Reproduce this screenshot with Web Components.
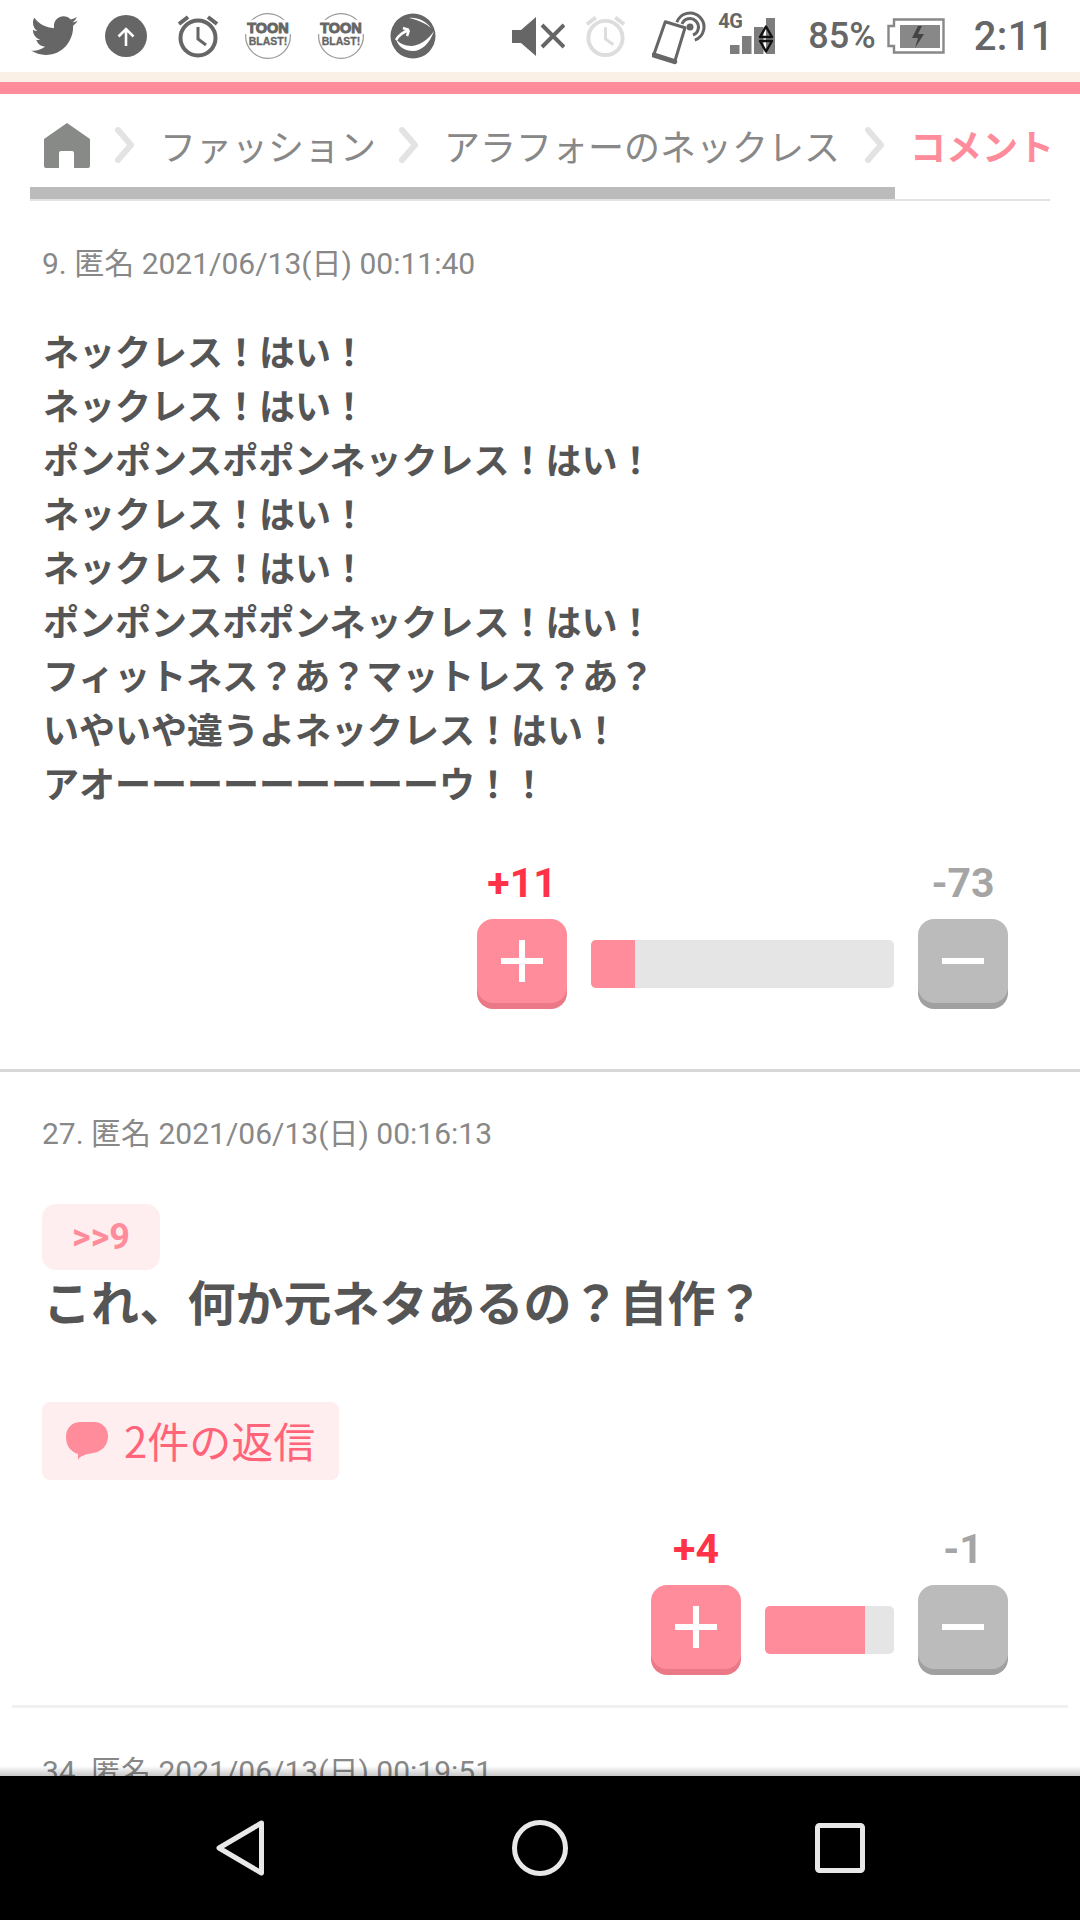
<!DOCTYPE html>
<html lang="ja">
<head>
<meta charset="utf-8">
<title>コメント</title>
<style>
html, body { margin: 0; padding: 0; background: #fff; }
body { width: 1080px; height: 1920px; overflow: hidden; font-family: Roboto, "Noto Sans CJK JP", sans-serif; }
</style>
</head>
<body>
<phone-page>
  <status-bar slot="status"></status-bar>
  <bread-crumbs slot="top"></bread-crumbs>
  <comment-item num="9" date="2021/06/13(日) 00:11:40" plus="11" minus="73" ratio="14.5">ネックレス！はい！<br>ネックレス！はい！<br>ポンポンスポポンネックレス！はい！<br>ネックレス！はい！<br>ネックレス！はい！<br>ポンポンスポポンネックレス！はい！<br>フィットネス？あ？マットレス？あ？<br>いやいや違うよネックレス！はい！<br>アオーーーーーーーーーウ！！</comment-item>
  <comment-item num="27" date="2021/06/13(日) 00:16:13" plus="4" minus="1" ratio="77.5" reply-to="9" replies="2" big="1">これ、何か元ネタあるの？自作？</comment-item>
  <comment-item num="34" date="2021/06/13(日) 00:19:51"></comment-item>
</phone-page>

<script>
// 外枠: 上のバー、スクロール部分、下のナビ
class PhonePage extends HTMLElement {
	constructor() {
		super();
		this.attachShadow({ mode: 'open' });
	}

	connectedCallback() {
		this.shadowRoot.innerHTML = `
		<style>
		:host { display: flex; flex-direction: column; width: 1080px; height: 1920px; background: #fff; }
		.stripe { height: 10px; background: #faf0e6; flex: none; }
		.pink { height: 12px; background: #ff8c9a; flex: none; }
		main { flex: 1; overflow: hidden; min-height: 0; position: relative; }
		.fade { position: absolute; left: 0; right: 0; bottom: 0; height: 10px; background: linear-gradient(rgba(0,0,0,0), rgba(0,0,0,.22)); }
		</style>
		<slot name="status"></slot>
		<div class="stripe"></div>
		<div class="pink"></div>
		<main><slot name="top"></slot><slot></slot><div class="fade"></div></main>
		<nav-bar></nav-bar>
		`;
	}
}

class StatusBar extends HTMLElement {
	constructor() {
		super();
		this.attachShadow({ mode: 'open' });
	}

	connectedCallback() {
		const toon = `<svg width="48" height="46" viewBox="0 0 48 46"><circle cx="24" cy="23" r="22.4" fill="#fff" stroke="#999" stroke-width="1.2"/><path d="M1 9 12 6 24 8 36 6 47 9 47 21 1 21Z" fill="#fff"/><text x="24" y="20" text-anchor="middle" font-family="Liberation Sans" font-weight="700" font-size="14.500" fill="#666" stroke="#666" stroke-width="1">TOON</text><text x="24" y="32" text-anchor="middle" font-family="Liberation Sans" font-weight="700" font-size="10.500" fill="#666" stroke="#666" stroke-width=".3">BLAST!</text></svg>`;
		this.shadowRoot.innerHTML = `
		<style>
		:host { display: flex; align-items: center; height: 72px; flex: none; background: #fff; color: #666; font-family: Roboto, sans-serif; }
		.left { display: flex; align-items: center; gap: 25px; padding-left: 31px; flex: 1; }
		.right { display: flex; align-items: center; padding-right: 26px; }
		svg { display: block; flex: none; }
		.pct { font-size: 36px; font-weight: 500; margin-left: 33px; }
		.time { font-size: 40px; font-weight: 500; margin-left: 29px; letter-spacing: .4px; }
		.net { position: relative; width: 60px; height: 42px; margin-left: 9px; }
		.four { position: absolute; left: 3px; top: -4px; font-size: 20px; line-height: 20px; font-weight: 700; letter-spacing: -.5px; }
		.net svg { position: absolute; left: 0; top: 0; }
		.ball { filter: blur(.5px); }
		</style>
		<div class="left">
			<svg width="47" height="40" viewBox="0 0 24 20" preserveAspectRatio="none"><path fill="#666" d="M24 2.400c-.9.400-1.800.700-2.800.800 1-.6 1.800-1.600 2.200-2.700-1 .6-2 1-3.100 1.200C19.300.7 18 .1 16.600.1c-2.700 0-4.900 2.200-4.900 4.900 0 .4 0 .8.100 1.100C7.700 5.900 4.100 4 1.700.9c-.4.700-.7 1.600-.7 2.500 0 1.700.9 3.200 2.200 4.100-.8 0-1.600-.2-2.200-.6v.1c0 2.400 1.700 4.400 3.900 4.800-.4.1-.8.200-1.300.2-.3 0-.6 0-.9-.1.6 2 2.400 3.400 4.600 3.400-1.700 1.300-3.800 2.100-6.100 2.100-.4 0-.8 0-1.200-.1 2.200 1.400 4.800 2.200 7.500 2.200 9.100 0 14-7.500 14-14v-.6c1-.7 1.800-1.600 2.500-2.600z"/></svg>
			<svg width="42" height="42" viewBox="0 0 42 42" style="margin-left:2px"><circle cx="21" cy="21" r="21" fill="#666"/><path d="M21 31V14M13.500 21.500 21 14l7.500 7.500" fill="none" stroke="#fff" stroke-width="2.600"/></svg>
			<svg width="42" height="44" viewBox="0 0 42 44" style="margin-left:5px"><circle cx="21" cy="24" r="17.500" fill="none" stroke="#666" stroke-width="4"/><path d="M21 13v12l8 6" fill="none" stroke="#666" stroke-width="3"/><path d="M2 10 11 3M40 10 31 3" stroke="#666" stroke-width="4"/></svg>
			${toon}
			${toon}
			<svg class="ball" width="46" height="46" viewBox="0 0 46 46"><circle cx="23" cy="23" r="22.500" fill="#666"/><path d="M6 26C8 34 15 38 23 38 32 38 40 30 44 18 38 27 30 32 22 33 14 33 9 30 6 26Z" fill="#fff"/><path d="M19 5C27 4 36 8 41 15 35 10 28 7 19 5Z" fill="#fff"/><path d="M6 27C9 22 13 19 19 17M19 17 13 15M19 17 17 23" fill="none" stroke="#fff" stroke-width="2.500"/></svg>
		</div>
		<div class="right">
			<svg width="53" height="39" viewBox="0 0 53 39"><path d="M0 13H9L24 0V39L9 26H0Z" fill="#666"/><path d="M30 8 52 30M52 8 30 30" stroke="#666" stroke-width="4"/></svg>
			<svg width="41" height="44" viewBox="0 0 42 44" style="margin-left:20px"><circle cx="21" cy="24" r="17.500" fill="none" stroke="#ddd" stroke-width="4"/><path d="M21 13v12l8 6" fill="none" stroke="#ddd" stroke-width="3"/><path d="M2 10 11 3M40 10 31 3" stroke="#ddd" stroke-width="4"/></svg>
			<svg width="54" height="58" viewBox="0 0 54 58" style="margin-left:26px"><g fill="none" stroke="#666" stroke-width="3"><path d="M24.800 15.300A14 14 0 1 1 42.800 33.200"/><path d="M30 17A8.500 8.500 0 1 1 41 28"/></g><circle cx="38" cy="20" r="3.500" fill="#666"/><path d="M13.300 14.700 33 20.700 22.700 54.700 1.700 48Z" fill="#fff" stroke="#666" stroke-width="3" stroke-linejoin="round"/><path d="M1.700 48 22.700 54.700" stroke="#666" stroke-width="5" stroke-linecap="round"/></svg>
			<div class="net">
				<svg width="60" height="42" viewBox="0 0 60 42"><rect x="15" y="30" width="9.500" height="9" fill="#7d7d7d"/><rect x="27" y="21" width="9.500" height="18" fill="#7d7d7d"/><rect x="39" y="12" width="9.500" height="27" fill="#7d7d7d"/><rect x="51" y="3" width="9.500" height="36" fill="#7d7d7d"/><path d="M51 11.500 57 22H45ZM45 26H57L51 36.500Z" fill="none" stroke="#111" stroke-width="2.400" stroke-linejoin="round"/></svg>
				<span class="four">4G</span>
			</div>
			<span class="pct">85%</span>
			<svg width="58" height="36" viewBox="0 0 58 36" style="margin-left:11px"><path d="M7 1.500H56.500V34.500H7V28H1.500V8H7Z" fill="#fff" stroke="#888" stroke-width="2.400"/><rect x="13" y="7" width="40" height="23" fill="#888"/><path d="M31 8 25 20H31L28 30 37 16H31L35 8Z" fill="#444"/></svg>
			<span class="time">2:11</span>
		</div>
		`;
	}
}

class BreadCrumbs extends HTMLElement {
	constructor() {
		super();
		this.attachShadow({ mode: 'open' });
	}

	connectedCallback() {
		const sep = (l, r) => `<svg width="20" height="36" viewBox="0 0 20 36" style="margin:0 ${r}px 0 ${l}px"><path d="M3 3 16 18 3 33" fill="none" stroke="#e3e3e3" stroke-width="6" stroke-linecap="round" stroke-linejoin="round"/></svg>`;
		this.shadowRoot.innerHTML = `
		<style>
		:host { display: block; margin: 0 30px; padding-top: 25px; font-family: "Noto Sans CJK JP", sans-serif; }
		.row { display: flex; align-items: center; height: 52px; padding-left: 14px; white-space: nowrap; font-size: 36px; color: #888; }
		.row span { line-height: 52px; }
		svg { display: block; flex: none; }
		.now { color: #ff8c9a; font-weight: 700; }
		.track { height: 12px; margin-top: 16px; border-bottom: 2px solid #e3e3e3; }
		.bar { height: 12px; width: 865px; background: #bbb; }
		</style>
		<div class="row">
			<svg width="46" height="45" viewBox="0 0 46 45"><path d="M23 0 46 16V43a2 2 0 0 1-2 2H30V30a2 2 0 0 0-2-2H17a2 2 0 0 0-2 2V45H2a2 2 0 0 1-2-2V16Z" fill="#888a88"/></svg>
			${sep(25, 25)}
			<span>ファッション</span>
			${sep(23, 25)}
			<span>アラフォーのネックレス</span>
			${sep(25, 25)}
			<span class="now">コメント</span>
		</div>
		<div class="track"><div class="bar"></div></div>
		`;
	}
}

class VoteBox extends HTMLElement {
	constructor() {
		super();
		this.attachShadow({ mode: 'open' });
	}

	connectedCallback() {
		const plus = this.getAttribute('plus');
		const minus = this.getAttribute('minus');
		const ratio = this.getAttribute('ratio');
		const w = this.getAttribute('bar');
		this.shadowRoot.innerHTML = `
		<style>
		:host { display: flex; justify-content: flex-end; align-items: flex-end; gap: 24px; padding-right: 72px; font-family: Roboto, sans-serif; }
		.col { display: flex; flex-direction: column; align-items: center; width: 90px; }
		.num { font-size: 41px; font-weight: 700; line-height: 46px; margin-bottom: 13px; white-space: nowrap; }
		.up .num { color: #ff3248; }
		.down .num { color: #a5a5a5; }
		.btn { width: 90px; height: 84px; border-radius: 16px; display: flex; align-items: center; justify-content: center; margin-bottom: 6px; }
		.up .btn { background: #ff8c9a; box-shadow: 0 6px 0 #ea7886; }
		.down .btn { background: #bbb; box-shadow: 0 6px 0 #a0a0a0; }
		.bar { width: ${w}px; height: 48px; margin-bottom: 21px; background: #e5e5e5; border-radius: 5px; overflow: hidden; }
		.fill { height: 100%; width: ${ratio}%; background: #ff8c9a; }
		svg { display: block; }
		</style>
		<div class="col up"><span class="num">+${plus}</span><div class="btn"><svg width="42" height="42" viewBox="0 0 42 42"><path d="M0 21H42M21 0V42" stroke="#fff" stroke-width="6"/></svg></div></div>
		<div class="bar"><div class="fill"></div></div>
		<div class="col down"><span class="num">-${minus}</span><div class="btn"><svg width="42" height="42" viewBox="0 0 42 42"><path d="M0 21H42" stroke="#fff" stroke-width="6"/></svg></div></div>
		`;
	}
}

class CommentItem extends HTMLElement {
	constructor() {
		super();
		this.attachShadow({ mode: 'open' });
	}

	connectedCallback() {
		const replyTo = this.getAttribute('reply-to');
		const replies = this.getAttribute('replies');
		const big = this.hasAttribute('big');
		const hasVote = this.hasAttribute('plus');
		const barW = big ? 129 : 303;
		this.shadowRoot.innerHTML = `
		<style>
		:host { display: block; font-family: Roboto, "Noto Sans CJK JP", sans-serif; }
		.meta { font-size: 30px; line-height: 40px; color: #888; padding: 0 42px; white-space: nowrap; }
		.body { padding: 0 43px; font-family: "Noto Sans CJK JP", sans-serif; color: #555; font-weight: 700; }
		.text { font-size: 36px; line-height: 54px; }
		.big .text { font-size: 48px; line-height: 60px; font-weight: 700; }
		.chip { display: flex; align-items: center; justify-content: center; width: 118px; height: 66px; margin-left: -1px; background: #ffeef0; border-radius: 14px; color: #ff8c9a; font: 700 36px Roboto, sans-serif; }
		.reply { display: flex; align-items: center; width: 297px; height: 78px; box-sizing: border-box; margin: 72px 0 0 -1px; padding-left: 24px; background: #ffeef0; border-radius: 8px; color: #ff6478; font-size: 42px; font-weight: 400; gap: 16px; white-space: nowrap; }
		.reply span { margin-bottom: 4px; }
		svg { display: block; flex: none; }
		</style>
		<div class="wrap ${big ? 'big' : ''}">
			<div class="meta">${this.getAttribute('num')}. 匿名 ${this.getAttribute('date')}</div>
			${hasVote ? `<div class="body">
				${replyTo ? `<div class="chip">&gt;&gt;${replyTo}</div>` : ''}
				<div class="text"><slot></slot></div>
				${replies ? `<div class="reply"><svg width="42" height="38" viewBox="0 0 42 38"><path d="M15 0H28C36 0 42 6 42 14 42 24 35 30 27 31 20 32 14 34 12 38L12 32C5 30 0 24 0 15 0 6 6 0 15 0Z" fill="#ff8c9a"/></svg><span>${replies}件の返信</span></div>` : ''}
			</div>
			<vote-box plus="${this.getAttribute('plus')}" minus="${this.getAttribute('minus')}" ratio="${this.getAttribute('ratio')}" bar="${barW}"></vote-box>` : ''}
		</div>
		`;
		const wrap = this.shadowRoot.querySelector('.wrap');
		const num = this.getAttribute('num');
		// 余白はコメントごとに違うのでここで調整
		if (num === '9') {
			this.style.cssText = 'padding-top:43px;padding-bottom:60px;border-bottom:3px solid #d8d8d8';
			wrap.querySelector('.body').style.marginTop = '39px';
			wrap.querySelector('vote-box').style.marginTop = '51px';
		}
		if (num === '27') {
			this.style.cssText = 'padding-top:42px;padding-bottom:30px;margin:0 12px;border-bottom:3px solid #f0f0f0';
			wrap.querySelector('.meta').style.paddingLeft = '30px';
			wrap.querySelector('.body').style.cssText = 'margin-top:50px;padding:0 31px';
			wrap.querySelector('vote-box').style.cssText = 'margin-top:46px;padding-right:60px';
		}
		if (num === '34') {
			this.style.paddingTop = '44px';
		}
	}
}

class NavBar extends HTMLElement {
	constructor() {
		super();
		this.attachShadow({ mode: 'open' });
	}

	connectedCallback() {
		this.shadowRoot.innerHTML = `
		<style>
		:host { display: flex; align-items: center; justify-content: center; height: 144px; background: #000; flex: none; }
		.slot { width: 300px; display: flex; justify-content: center; }
		svg { display: block; }
		</style>
		<div class="slot"><svg width="48" height="56" viewBox="0 0 48 56"><path d="M45.500 3 3 28 45.500 53Z" fill="none" stroke="#e8e8e8" stroke-width="5" stroke-linejoin="round"/></svg></div>
		<div class="slot"><svg width="56" height="56" viewBox="0 0 56 56"><circle cx="28" cy="28" r="25.500" fill="none" stroke="#e8e8e8" stroke-width="5"/></svg></div>
		<div class="slot"><svg width="50" height="50" viewBox="0 0 50 50"><rect x="2.500" y="2.500" width="45" height="45" rx="2" fill="none" stroke="#e8e8e8" stroke-width="5"/></svg></div>
		`;
	}
}

customElements.define('phone-page', PhonePage);
customElements.define('status-bar', StatusBar);
customElements.define('bread-crumbs', BreadCrumbs);
customElements.define('vote-box', VoteBox);
customElements.define('comment-item', CommentItem);
customElements.define('nav-bar', NavBar);
</script>
</body>
</html>
